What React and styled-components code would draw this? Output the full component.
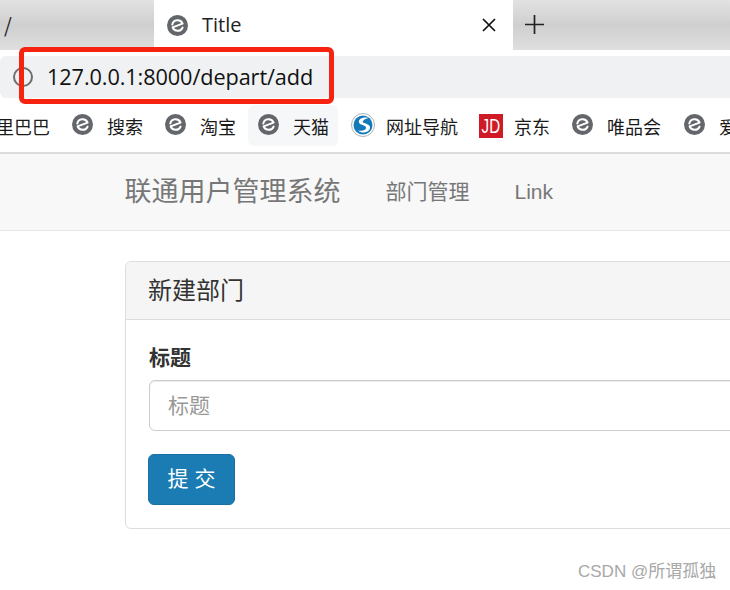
import styled, { createGlobalStyle } from "styled-components";

const GlobalStyle = createGlobalStyle`
  html, body { margin: 0; padding: 0; background: #fff; }
  * { box-sizing: border-box; }
`;

const uiFont = `"Noto Sans CJK SC", "Liberation Sans", sans-serif`;
const pageFont = `"Liberation Sans", "Noto Sans CJK SC", sans-serif`;

const Screen = styled.div`
  position: relative;
  width: 730px;
  height: 590px;
  overflow: hidden;
  background: #fff;
  font-family: ${pageFont};
`;

const TabStrip = styled.div`
  display: flex;
  height: 50px;
  background: linear-gradient(#e2e2e2, #cfcfcf 50%, #dfdfdf);
  margin-bottom: 6px;
`;

const OldTab = styled.div`
  width: 154px;
  padding: 12px 0 0 4px;
  font: 20px/26px ${uiFont};
  color: #222;
`;

const ActiveTab = styled.div`
  width: 359px;
  height: 56px;
  background: #fff;
  display: flex;
  align-items: center;
  padding: 0 17px 6px 13px;
  font: 20px/26px "Open Sans", ${uiFont};
  color: #222;
`;

const TabTitle = styled.span`
  margin-left: 14px;
  flex: 1;
`;

const NewTab = styled.div`
  display: flex;
  align-items: center;
  padding: 0 0 2px 12px;
`;

const AddressBar = styled.div`
  height: 42px;
  background: #f0f1f3;
  border-radius: 6px 0 0 6px;
  display: flex;
  align-items: center;
  padding-left: 13px;
`;

const Url = styled.span`
  margin-left: 14px;
  font: 21.7px/28px "Open Sans", "Liberation Sans", sans-serif;
  color: #111;
  letter-spacing: -0.1px;
`;

const Bookmarks = styled.div`
  height: 54px;
  display: flex;
  align-items: center;
  gap: 3px;
  margin-left: -67px;
  padding-top: 1px;
  white-space: nowrap;
`;

const ShadowLine = styled.div`
  height: 2px;
  background: #dcdcdc;
`;

const Bookmark = styled.div`
  display: flex;
  flex: none;
  align-items: center;
  gap: ${(props) => props.$gap || 14}px;
  height: 41px;
  padding: 0 ${(props) => props.$right || 9}px 0 10px;
  border-radius: 6px;
  background: ${(props) => (props.$hover ? "#f6f7f8" : "transparent")};
  font: 18px/24px ${uiFont};
  color: #1a1a1a;
`;

const Glyph = styled.svg`
  flex: none;
  margin-bottom: ${(props) => props.$lift || 0}px;
`;

const JdBadge = styled.span`
  display: flex;
  align-items: center;
  justify-content: center;
  width: 24px;
  height: 24px;
  background: #cf1b26;
  color: #fff;
  font: 21px/24px "Liberation Sans", sans-serif;
`;

const JdLetters = styled.span`
  display: block;
  transform: scaleX(0.72);
`;

const Navbar = styled.nav`
  height: 77px;
  background: #f8f8f8;
  border-bottom: 1px solid #e7e7e7;
  display: flex;
  align-items: center;
  padding: 0 0 0 124.5px;
  color: #777;
`;

const Brand = styled.div`
  font-size: 27px;
  line-height: 30px;
  margin-right: 45px;
`;

const NavLink = styled.div`
  font-size: 21px;
  line-height: 30px;
  margin-right: 45px;
`;

const Panel = styled.section`
  width: 800px;
  height: 268px;
  margin: 30px 0 0 125px;
  border: 1px solid #ddd;
  border-radius: 6px;
`;

const PanelHeading = styled.div`
  height: 58px;
  background: #f5f5f5;
  border-bottom: 1px solid #ddd;
  border-radius: 5px 5px 0 0;
  padding: 0 22px;
  font-size: 24px;
  line-height: 58px;
  color: #333;
`;

const PanelBody = styled.div`
  padding: 23px 23px;
`;

const Label = styled.label`
  display: block;
  font-size: 21px;
  font-weight: 700;
  line-height: 30px;
  color: #333;
  margin-bottom: 7px;
`;

const TextInput = styled.div`
  height: 51px;
  border: 1px solid #ccc;
  border-radius: 6px;
  padding: 0 18px;
  font-size: 21px;
  line-height: 49px;
  color: #999;
  box-shadow: inset 0 1px 1px rgba(0, 0, 0, 0.075);
  margin-bottom: 23px;
`;

const SubmitButton = styled.div`
  width: 87px;
  height: 51px;
  margin-left: -1px;
  background: #1b7bb3;
  border: 1px solid #1a6fa3;
  border-radius: 6px;
  color: #fff;
  font-size: 21px;
  line-height: 47px;
  text-align: center;
`;

const Highlight = styled.div`
  position: absolute;
  left: 19px;
  top: 47px;
  width: 315px;
  height: 57px;
  border: 5px solid #f5230f;
  border-radius: 6px;
`;

const Watermark = styled.div`
  position: absolute;
  left: 578px;
  top: 560px;
  font: 17px/23px "Liberation Sans", "Noto Sans CJK SC", sans-serif;
  color: #a8a8a8;
`;

const EdgeIcon = ({ lift }) => (
  <Glyph width="21" height="21" viewBox="0 0 21 21" $lift={lift}>
    <circle cx="10.5" cy="10.5" r="10.5" fill="#63666a" />
    <path
      d="M5.3 9.6 A5.4 5.4 0 0 1 15.6 8.6 L5.6 12.4 M5.6 12.4 A5.4 5.4 0 0 0 15.6 12.6"
      fill="none"
      stroke="#fff"
      strokeWidth="2"
      strokeLinecap="round"
      strokeLinejoin="round"
    />
  </Glyph>
);

const SogouIcon = () => (
  <Glyph width="24" height="24" viewBox="0 0 24 24" $lift={1}>
    <circle cx="12" cy="12" r="11.5" fill="#fff" stroke="#a9b4ba" />
    <circle cx="12" cy="12" r="9.5" fill="#1479b8" />
    <path
      d="M17.5 5 C12 3.5 7 6 8 9.5 C9 12.5 14.5 11.5 15 14.5 C15.4 17 11 18.5 7 17.5 C10.5 21 17.5 20 19 15.5 C20 11.5 14 10.5 12 9.5 C11 8.5 13 6 17.5 5 Z"
      fill="#fff"
    />
  </Glyph>
);

const InfoIcon = () => (
  <svg width="20" height="20" viewBox="0 0 20 20">
    <circle cx="10" cy="10" r="9" fill="none" stroke="#6e6e6e" strokeWidth="2" />
    <path d="M10 9v5M10 6v1.6" stroke="#6e6e6e" strokeWidth="2" />
  </svg>
);

const CloseIcon = () => (
  <svg width="14" height="14" viewBox="0 0 14 14">
    <path d="M1 1l12 12M13 1L1 13" stroke="#111" strokeWidth="1.7" />
  </svg>
);

const PlusIcon = () => (
  <svg width="19" height="19" viewBox="0 0 19 19">
    <path d="M0 9.5h19M9.5 0v19" stroke="#222" strokeWidth="1.7" />
  </svg>
);

const bookmarks = [
  { label: "阿里巴巴" },
  { label: "搜索" },
  { label: "淘宝" },
  { label: "天猫", hover: true },
  { label: "网址导航", icon: <SogouIcon />, gap: 11, right: 8 },
  {
    label: "京东",
    icon: (
      <JdBadge>
        <JdLetters>JD</JdLetters>
      </JdBadge>
    ),
    gap: 11,
  },
  { label: "唯品会", right: 10 },
  { label: "爱奇艺" },
];

const App = () => {
  return (
    <Screen>
      <GlobalStyle />
      <TabStrip>
        <OldTab>/</OldTab>
        <ActiveTab>
          <EdgeIcon />
          <TabTitle>Title</TabTitle>
          <CloseIcon />
        </ActiveTab>
        <NewTab>
          <PlusIcon />
        </NewTab>
      </TabStrip>
      <AddressBar>
        <InfoIcon />
        <Url>127.0.0.1:8000/depart/add</Url>
      </AddressBar>
      <Bookmarks>
        {bookmarks.map((item) => (
          <Bookmark key={item.label} $hover={item.hover} $gap={item.gap} $right={item.right}>
            {item.icon || <EdgeIcon lift={2} />}
            <span>{item.label}</span>
          </Bookmark>
        ))}
      </Bookmarks>
      <ShadowLine />
      <Navbar>
        <Brand>联通用户管理系统</Brand>
        <NavLink>部门管理</NavLink>
        <NavLink>Link</NavLink>
      </Navbar>
      <Panel>
        <PanelHeading>新建部门</PanelHeading>
        <PanelBody>
          <Label>标题</Label>
          <TextInput>标题</TextInput>
          <SubmitButton>提 交</SubmitButton>
        </PanelBody>
      </Panel>
      <Highlight />
      <Watermark>CSDN @所谓孤独</Watermark>
    </Screen>
  );
};

export default App;
